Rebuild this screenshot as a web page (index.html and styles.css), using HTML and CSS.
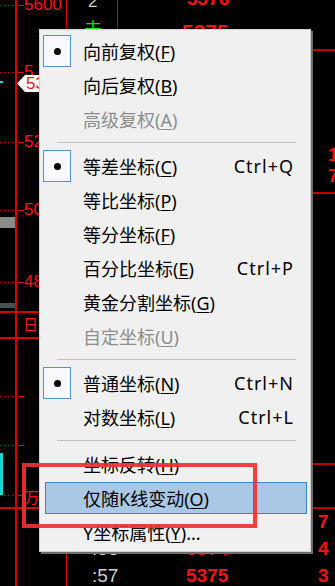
FILE: index.html
```html
<!DOCTYPE html>
<html lang="zh-CN">
  <head>
    <meta charset="UTF-8" />
    <meta name="viewport" content="width=device-width, initial-scale=1.0" />
    <title>坐标菜单</title>
    <link rel="stylesheet" href="styles.css">
  </head>
  <body>
    <div class="screen">
      <!-- 背景のK线图 -->
      <div class="chart">
        <div class="ln v-axis"></div>
        <div class="ln v-a"></div>
        <div class="ln v-b"></div>
        <div class="ln v-c"></div>
        <div class="ln h-1"></div>
        <div class="ln h-2"></div>
        <div class="ln h-3"></div>
        <div class="ln r-1"></div>
        <div class="ln r-2"></div>
        <div class="ln r-3"></div>
        <div class="ln r-4"></div>

        <div class="tick t1"><span class="dots"></span><span class="dash"></span></div>
        <div class="tick t2"><span class="dots"></span><span class="dash"></span></div>
        <div class="tick t3"><span class="dots"></span><span class="dash"></span></div>
        <div class="tick t4"><span class="dots"></span><span class="dash"></span></div>
        <div class="tick t5"><span class="dots"></span><span class="dash"></span></div>
        <div class="tick t6"><span class="dots"></span><span class="dash"></span></div>
        <div class="tick t7"><span class="dots"></span><span class="dash"></span></div>
        <div class="tick t8"><span class="dots"></span><span class="dash"></span></div>

        <div class="lbl l1">5600</div>
        <div class="lbl l2">5</div>
        <div class="lbl l3">52</div>
        <div class="lbl l4">50</div>
        <div class="lbl l5">48</div>
        <div class="price-tag">53</div>
        <div class="cursor-dot"></div>

        <div class="bar g1"></div>
        <div class="bar g2"></div>
        <div class="candle"></div>
        <div class="cell-text c-day">日</div>
        <div class="cell-text c-wan">万</div>

        <div class="num top-vol">2</div>
        <div class="num top-price">5376</div>
        <div class="sell">去</div>
        <div class="num top-price2">5375</div>
        <div class="num top-green">4</div>

        <div class="num r-num1">1</div>
        <div class="num r-num2">7</div>
        <div class="num r-num3">7</div>
        <div class="num r-num4">4</div>
        <div class="num r-num5">3</div>

        <div class="num time t-hidden">:56</div>
        <div class="num price p-hidden">5374</div>
        <div class="num time t-last">:57</div>
        <div class="num price p-last">5375</div>
      </div>

      <!-- 右键菜单 -->
      <div class="menu">
        <div class="item"><span class="check on"></span><span class="label">向前复权(<u>F</u>)</span></div>
        <div class="item"><span class="check"></span><span class="label">向后复权(<u>B</u>)</span></div>
        <div class="item off"><span class="check"></span><span class="label">高级复权(<u>A</u>)</span></div>
        <div class="sep"></div>
        <div class="item"><span class="check on"></span><span class="label">等差坐标(<u>C</u>)</span><span class="key">Ctrl+Q</span></div>
        <div class="item"><span class="check"></span><span class="label">等比坐标(<u>P</u>)</span></div>
        <div class="item"><span class="check"></span><span class="label">等分坐标(<u>F</u>)</span></div>
        <div class="item"><span class="check"></span><span class="label">百分比坐标(<u>E</u>)</span><span class="key">Ctrl+P</span></div>
        <div class="item"><span class="check"></span><span class="label">黄金分割坐标(<u>G</u>)</span></div>
        <div class="item off"><span class="check"></span><span class="label">自定坐标(<u>U</u>)</span></div>
        <div class="sep"></div>
        <div class="item"><span class="check on"></span><span class="label">普通坐标(<u>N</u>)</span><span class="key">Ctrl+N</span></div>
        <div class="item"><span class="check"></span><span class="label">对数坐标(<u>L</u>)</span><span class="key">Ctrl+L</span></div>
        <div class="sep"></div>
        <div class="item"><span class="check"></span><span class="label">坐标反转(<u>H</u>)</span></div>
        <div class="item hot"><span class="check"></span><span class="label">仅随K线变动(<u>O</u>)</span></div>
        <div class="item"><span class="check"></span><span class="label">Y坐标属性(<u>Y</u>)...</span></div>
      </div>

      <!-- 标注框 -->
      <div class="mark"></div>
    </div>
  </body>
</html>
```

FILE: styles.css
```css
body {
  margin: 0;
  background-color: #000;
}

.screen {
  position: relative;
  width: 335px;
  height: 586px;
  overflow: hidden;
  background-color: #000;
  font-family: "Liberation Sans", sans-serif;
}

/* 背景チャート */
.chart > * {
  position: absolute;
}

.ln {
  background-color: #d80000;
}

.v-axis { left: 15px; top: 0; width: 2px; height: 586px; }
.v-a { left: 66px; top: 0; width: 1px; height: 30px; }
.v-b { left: 117px; top: 0; width: 1px; height: 30px; }
.v-c { left: 66px; top: 552px; width: 1px; height: 34px; }
.h-1 { left: 0; top: 311px; width: 40px; height: 2px; }
.h-2 { left: 0; top: 337px; width: 40px; height: 2px; }
.h-3 { left: 0; top: 507px; width: 40px; height: 2px; }
.r-1 { left: 311px; top: 49px; width: 24px; height: 2px; background-color: #c00000; }
.r-2 { left: 311px; top: 192px; width: 24px; height: 2px; background-color: #c00000; }
.r-3 { left: 311px; top: 463px; width: 24px; height: 2px; background-color: #c00000; }
.r-4 { left: 311px; top: 507px; width: 24px; height: 2px; background-color: #c00000; }

.tick {
  left: 0;
  width: 24px;
  height: 1px;
  display: flex;
  gap: 4px;
}

.tick .dots {
  width: 14px;
  height: 1px;
  background: repeating-linear-gradient(to right, #c00000 0 1px, transparent 1px 4px);
}

.tick .dash {
  width: 6px;
  height: 1px;
  background-color: #e00000;
}

.t1 { top: 5px; }
.t2 { top: 72px; }
.t3 { top: 142px; }
.t4 { top: 210px; }
.t5 { top: 282px; }
.t6 { top: 396px; }
.t7 { top: 445px; }
.t8 { top: 495px; }

.lbl {
  left: 24px;
  color: #ff1010;
  font-size: 17px;
  line-height: 16px;
}

.l1 { top: -3px; }
.l2 { top: 64px; }
.l3 { top: 134px; }
.l4 { top: 202px; }
.l5 { top: 274px; }

.price-tag {
  left: 17px;
  top: 75px;
  width: 24px;
  height: 17px;
  box-sizing: border-box;
  padding-left: 9px;
  background-color: #fff;
  color: #ff1010;
  font-size: 17px;
  line-height: 17px;
  clip-path: polygon(0 50%, 8px 0, 100% 0, 100% 100%, 8px 100%);
}

.cursor-dot {
  left: 0;
  top: 81px;
  width: 3px;
  height: 2px;
  background-color: #3cc8d8;
}

.bar { left: 0; width: 15px; }
.g1 { top: 217px; height: 11px; background-color: #8a8a8a; }
.g2 { top: 303px; height: 5px; background-color: #4e4e4e; }

.candle {
  left: 0;
  top: 453px;
  width: 3px;
  height: 42px;
  background-color: #12d8d8;
}

.cell-text {
  color: #ff1010;
  font-family: "Noto Sans CJK SC", sans-serif;
  font-size: 15px;
  line-height: 18px;
}

.c-day { left: 23px; top: 315px; }
.c-wan { left: 24px; top: 488px; }

.num {
  font-size: 19px;
  line-height: 20px;
  font-weight: bold;
  color: #ff1010;
}

.top-vol { left: 88px; top: -8px; font-weight: normal; color: #d0d0d0; font-size: 17px; }
.top-price { left: 187px; top: -11px; }
.top-price2 { left: 182px; top: 22px; font-size: 21px; }
.top-green { left: 329px; top: -14px; color: #00d000; }

.sell {
  left: 84px;
  top: 18px;
  color: #10e010;
  font-family: "Noto Sans CJK SC", sans-serif;
  font-size: 18px;
  line-height: 20px;
}

.r-num1 { left: 328px; top: 145px; }
.r-num2 { left: 328px; top: 166px; }
.r-num3 { left: 318px; top: 512px; }
.r-num4 { left: 318px; top: 539px; }
.r-num5 { left: 318px; top: 566px; }

.time { color: #cfcfcf; font-weight: normal; }
.t-hidden { left: 92px; top: 539px; }
.p-hidden { left: 186px; top: 539px; }
.t-last { left: 92px; top: 566px; }
.p-last { left: 186px; top: 566px; }

/* 右键菜单 */
.menu {
  position: absolute;
  left: 39px;
  top: 29px;
  width: 272px;
  box-sizing: border-box;
  padding: 4px 0 2px;
  background-color: #f0f0f0;
  border: 1px solid #d2d2d2;
  box-shadow: 2px 2px 0 #6c6c6c;
  font-family: "Noto Sans", "Noto Sans CJK SC", sans-serif;
  font-size: 18px;
  color: #000;
}

.item {
  display: flex;
  align-items: center;
  height: 34px;
  padding: 0 17px 0 3px;
  white-space: nowrap;
}

.item.off {
  color: #8d8d8d;
}

.item.hot {
  height: 32px;
  margin: 1px 3px 1px 5px;
  padding-left: 0;
  box-sizing: border-box;
  background-color: #a8c8e6;
  border: 1px solid #3c84cf;
}

.check {
  flex: none;
  width: 28px;
  height: 32px;
  margin-right: 12px;
  box-sizing: border-box;
  display: flex;
  align-items: center;
  justify-content: center;
}

.hot .check {
  width: 25px;
}

.check.on {
  background-color: #f7f9fc;
  border: 1px solid #4d94da;
}

.check.on::after {
  content: "";
  width: 7px;
  height: 7px;
  border-radius: 50%;
  background-color: #000;
}

.label {
  flex: 1;
}

.label u {
  text-underline-offset: 2px;
}

.key {
  letter-spacing: 1px;
  margin-right: -1px;
}

.sep {
  height: 1px;
  margin: 6px 14px 6px 17px;
  background-color: #c2c2c2;
}

/* 标注框 */
.mark {
  position: absolute;
  left: 22px;
  top: 463px;
  width: 235px;
  height: 65px;
  box-sizing: border-box;
  border: 4px solid rgba(242, 48, 48, 0.92);
}
```
